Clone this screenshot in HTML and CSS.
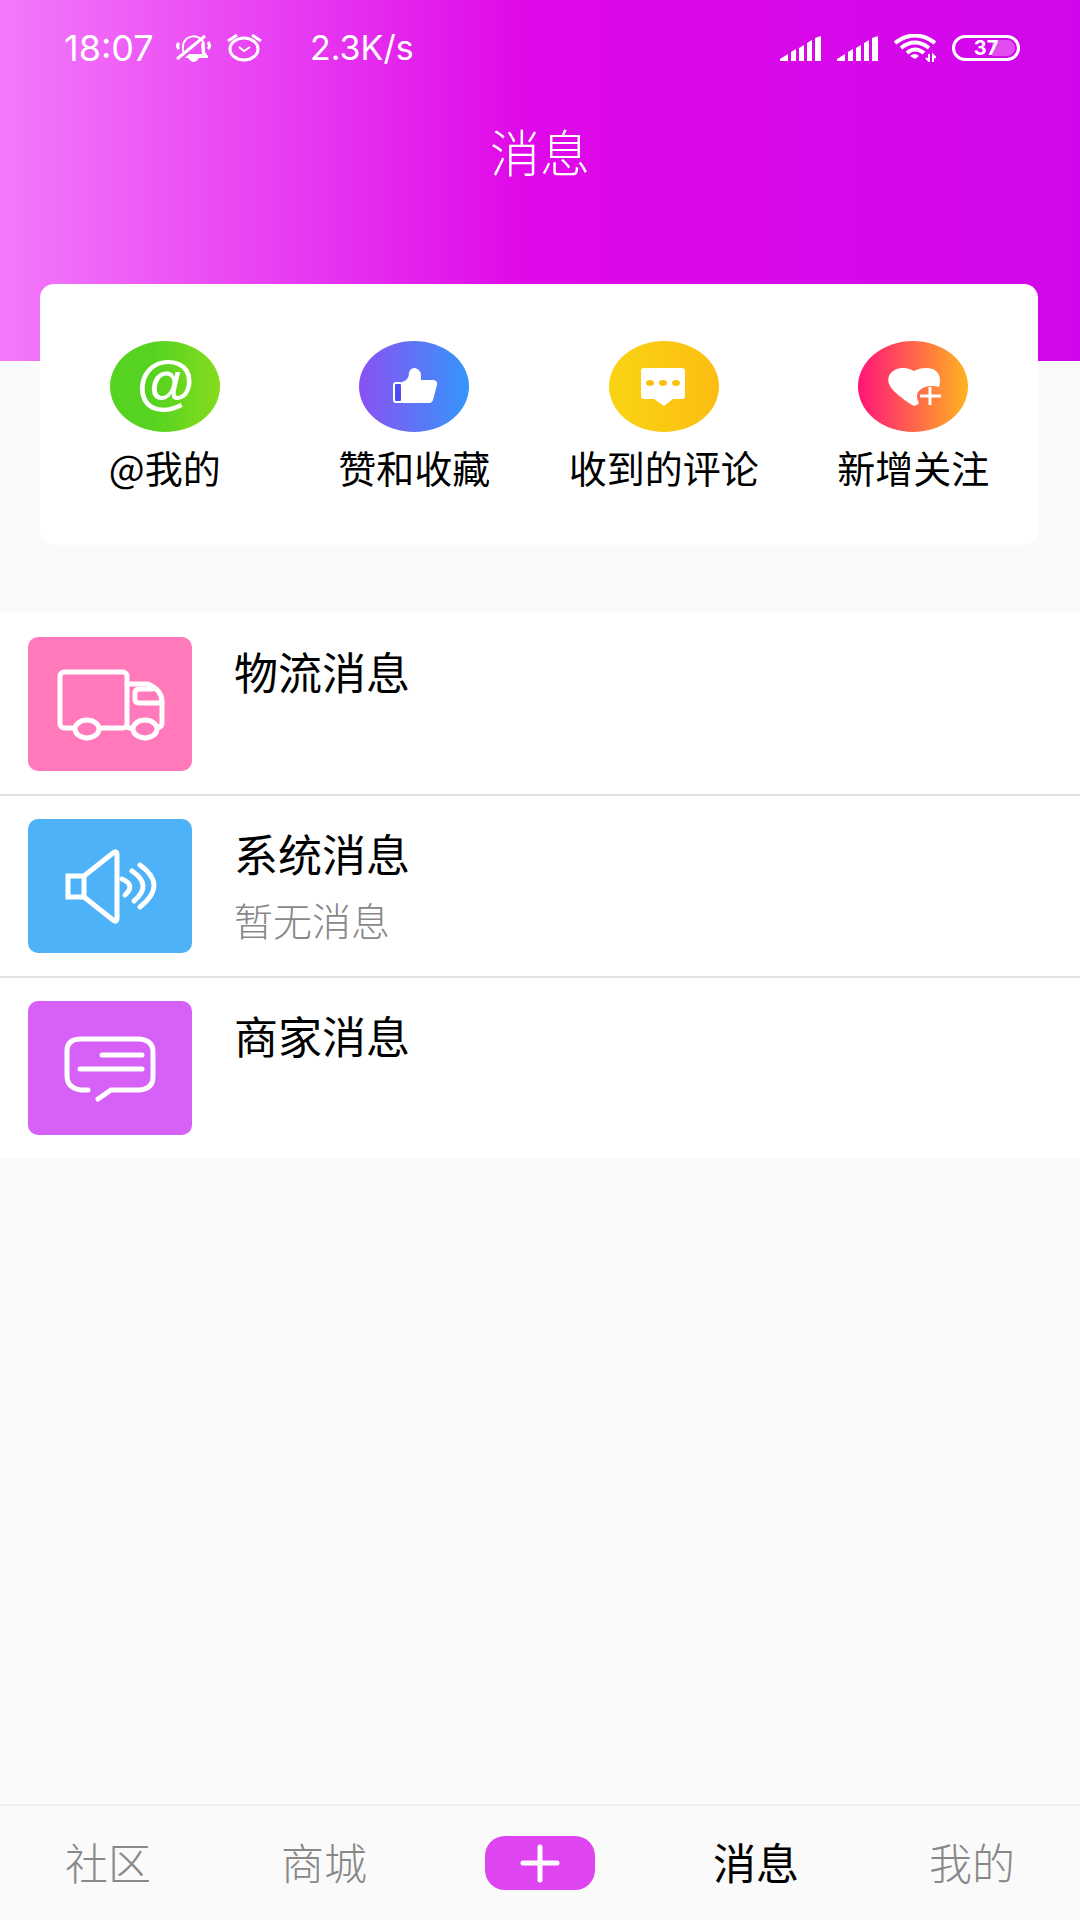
FILE: index.html
```html
<!DOCTYPE html>
<html lang="zh-CN">
<head>
  <meta charset="UTF-8">
  <meta name="viewport" content="width=device-width, initial-scale=1.0">
  <title>消息</title>
  <link rel="stylesheet" href="styles.css">
</head>
<body>
  <header class="header">
    <div class="status-bar">
      <div class="status-left">
        <span class="time">18:07</span>
        <svg width="35" height="28" viewBox="0 0 35 28" fill="none" stroke="#fff" stroke-width="2">
          <path d="M7 18V12C8 0 25 -1 28 10"/>
          <path d="M3 9Q0 12 3 15M32 8Q35 12 32 15" stroke-width="3"/>
          <path d="M1 25L29 2" stroke-width="3"/>
          <path d="M25 10L28 7Q29 10 29 18L32 22V24H9L13 20H26Z" fill="#fff" stroke="none"/>
          <path d="M12 24H23Q21 28 17 28Q14 27 12 24Z" fill="#fff" stroke="none"/>
        </svg>
        <svg width="35" height="28" viewBox="0 0 35 28" fill="none" stroke="#fff" stroke-width="3">
          <ellipse cx="17" cy="15" rx="14" ry="11"/>
          <path d="M1 7L10 1M25 1L34 7"/>
          <path d="M12 13L17 17L23 13" stroke-width="2"/>
        </svg>
        <span class="net-speed">2.3K/s</span>
      </div>
      <div class="status-right">
        <svg width="41" height="25" viewBox="0 0 41 25" fill="#fff">
          <path d="M0 25V23L8 18V25ZM11 25V16L16 13V25ZM19 25V12L24 9V25ZM27 25V7L32 4V25ZM35 25V2L41 0V25Z"/>
        </svg>
        <svg width="41" height="25" viewBox="0 0 41 25" fill="#fff">
          <path d="M0 25V23L8 18V25ZM11 25V16L16 13V25ZM19 25V12L24 9V25ZM27 25V7L32 4V25ZM35 25V2L41 0V25Z"/>
        </svg>
        <svg width="42" height="28" viewBox="0 0 42 28" fill="none" stroke="#fff" stroke-width="4">
          <path d="M1 9Q21 -6 41 9M7 14Q21 3 35 14M13 19Q21 12 30 19"/>
          <path d="M16 22Q21 18 25 22L21 25Z" fill="#fff" stroke="none"/>
          <path d="M35 20V27L32 24M39 28V21L42 24" stroke-width="2"/>
        </svg>
        <span class="battery">37</span>
      </div>
    </div>
    <h1>消息</h1>
  </header>

  <main>
    <nav class="shortcuts">
      <a href="#" class="shortcut">
        <span class="round green">@</span>
        @我的
      </a>
      <a href="#" class="shortcut">
        <span class="round blue">
          <svg width="110" height="91" viewBox="0 0 110 91" fill="#fff">
            <path d="M43 41Q50 39 50 32Q51 27 56 27Q63 28 62 39H75Q79 40 78 44L74 59Q73 62 70 62H43Z"/>
            <rect x="35" y="42" width="8" height="19" rx="2" fill="#4f4bf5" stroke="#fff" stroke-width="2"/>
          </svg>
        </span>
        赞和收藏
      </a>
      <a href="#" class="shortcut">
        <span class="round yellow">
          <svg width="110" height="91" viewBox="0 0 110 91" fill="#fff">
            <path d="M35 27H73Q76 27 76 30V55Q76 58 73 58H64L55 65L45 58H35Q32 58 32 55V30Q32 27 35 27Z"/>
            <g fill="#fdbf0f">
              <ellipse cx="41" cy="42" rx="4" ry="3"/>
              <ellipse cx="54" cy="42" rx="4" ry="3"/>
              <ellipse cx="67" cy="42" rx="4" ry="3"/>
            </g>
          </svg>
        </span>
        收到的评论
      </a>
      <a href="#" class="shortcut">
        <span class="round red">
          <svg width="110" height="91" viewBox="0 0 110 91">
            <path d="M56 30C48 25 37 26 32 33C26 43 36 52 54 64Q58 66 61 62Q56 53 63 48Q70 43 81 46C84 36 80 27 69 27Q61 27 56 30Z" fill="#fff"/>
            <path d="M62 55H83M72 46V64" fill="none" stroke="#fff" stroke-width="3"/>
          </svg>
        </span>
        新增关注
      </a>
    </nav>

    <section class="messages">
      <a href="#" class="message">
        <svg class="tile pink" viewBox="0 0 164 134">
          <rect x="32" y="35" width="67" height="56" rx="4"/>
          <path d="M99 47H120Q134 53 134 65V86Q134 90 129 91H101"/>
          <path d="M124 52H111Q107 52 107 57V62Q107 66 111 66H134"/>
          <g fill="#ff79bb">
            <ellipse cx="59" cy="92" rx="12" ry="9"/>
            <ellipse cx="117" cy="92" rx="12" ry="9"/>
          </g>
        </svg>
        <div class="text">
          <h2>物流消息</h2>
        </div>
      </a>
      <a href="#" class="message">
        <svg class="tile sky" viewBox="0 0 164 134">
          <path d="M40 57H56V78H40Z"/>
          <path d="M56 57L85 34Q89 31 89 36V99Q89 104 85 101L56 78"/>
          <path d="M94 60Q108 66 97 76M104 52Q125 66 106 82M112 46Q140 66 112 88"/>
        </svg>
        <div class="text">
          <h2>系统消息</h2>
          <p>暂无消息</p>
        </div>
      </a>
      <a href="#" class="message">
        <svg class="tile purple" viewBox="0 0 164 134">
          <path d="M60 89H53Q39 87 39 75V50Q39 38 53 38H111Q125 39 125 51V76Q125 88 111 89H83L70 98"/>
          <path d="M74 54H114M52 68H114"/>
        </svg>
        <div class="text">
          <h2>商家消息</h2>
        </div>
      </a>
    </section>
  </main>

  <nav class="tab-bar">
    <a href="#">社区</a>
    <a href="#">商城</a>
    <button type="button" aria-label="发布">
      <svg width="40" height="40" viewBox="0 0 40 40" fill="none" stroke="#fff" stroke-width="5" stroke-linecap="round">
        <path d="M3 20H37M20 4V37"/>
      </svg>
    </button>
    <a href="#" class="active">消息</a>
    <a href="#">我的</a>
  </nav>
</body>
</html>
```
FILE: styles.css
```css
* {
  box-sizing: border-box;
}

body {
  font-family: "Noto Sans CJK SC", sans-serif;
  font-weight: 400;
  margin: 0;
  min-height: 100vh;
  display: flex;
  flex-direction: column;
  background: #fafafa;
  color: #000;
}

a {
  color: inherit;
  text-decoration: none;
}

svg {
  display: block;
}

h1, h2, p {
  margin: 0;
  font-weight: inherit;
}

.header {
  height: 361px;
  background: linear-gradient(90deg, #f37afa 0%, #e83ef2 26%, #df08e8 49%, #d007ea 100%);
  color: #fff;
}

.status-bar {
  display: flex;
  justify-content: space-between;
  padding: 32px 60px 0 64px;
  height: 64px;
  font-family: Inter, sans-serif;
  font-size: 34px;
  font-weight: 400;
  line-height: 32px;
}

.status-left,
.status-right {
  display: flex;
  align-items: center;
  gap: 16px;
}

.time {
  min-width: 96px;
  font-size: 36px;
}

.net-speed {
  margin-left: 32px;
}

.battery {
  width: 68px;
  height: 26px;
  border: 3px solid #fff;
  border-radius: 13px;
  background: linear-gradient(90deg, transparent 60%, #e24df0 60%) content-box;
  padding: 2px;
  font-size: 20px;
  font-weight: 700;
  line-height: 16px;
  text-align: center;
}

h1 {
  margin-top: 56px;
  font-size: 50px;
  font-weight: 300;
  line-height: 60px;
  text-align: center;
}

.shortcuts {
  display: grid;
  grid-template-columns: repeat(4, 1fr);
  margin: -77px 42px 0 40px;
  padding: 57px 0 52px;
  background: #fff;
  border-radius: 14px;
}

.shortcut {
  display: flex;
  flex-direction: column;
  align-items: center;
  gap: 8px;
  font-size: 38px;
  line-height: 53px;
  white-space: nowrap;
}

.round {
  display: flex;
  align-items: center;
  justify-content: center;
  width: 110px;
  height: 91px;
  border-radius: 50%;
  color: #fff;
  font-family: "Liberation Sans", sans-serif;
  font-size: 60px;
  font-style: italic;
  font-weight: 700;
}

.green {
  padding-bottom: 8px;
  background: linear-gradient(90deg, #56d321 40%, #85dc1c);
}

.blue {
  background: linear-gradient(90deg, #8b50f2, #3596fb);
}

.yellow {
  background: linear-gradient(90deg, #f9d413, #fdbd12);
}

.red {
  background: linear-gradient(90deg, #ff1479, #ffb41f);
}

.messages {
  margin-top: 67px;
  background: #fff;
}

.message {
  display: flex;
  gap: 42px;
  padding: 25px 28px 23px;
}

.message + .message {
  border-top: 2px solid #e2e2e2;
  padding-top: 23px;
}

.tile {
  flex: none;
  width: 164px;
  height: 134px;
  border-radius: 10px;
  fill: none;
  stroke: #fff;
  stroke-width: 5;
  stroke-linecap: round;
}

.pink {
  background: #ff79bb;
}

.sky {
  background: #4db2f8;
}

.purple {
  background: #d760f7;
}

.text {
  padding-top: 4px;
}

h2 {
  font-size: 44px;
  line-height: 60px;
}

p {
  margin-top: 8px;
  color: #888;
  font-size: 39px;
  font-weight: 300;
  line-height: 56px;
}

.tab-bar {
  display: grid;
  grid-template-columns: repeat(5, 1fr);
  align-items: center;
  justify-items: center;
  margin-top: auto;
  height: 116px;
  border-top: 2px solid #f0f0f0;
  color: #888;
  font-size: 43px;
  font-weight: 300;
  line-height: 60px;
}

.tab-bar a {
  padding-bottom: 4px;
}

.tab-bar .active {
  color: #000;
  font-weight: 400;
}

.tab-bar button {
  display: flex;
  align-items: center;
  justify-content: center;
  width: 110px;
  height: 54px;
  padding: 0;
  border: none;
  border-radius: 20px;
  background: #de45f0;
  cursor: pointer;
}
```
